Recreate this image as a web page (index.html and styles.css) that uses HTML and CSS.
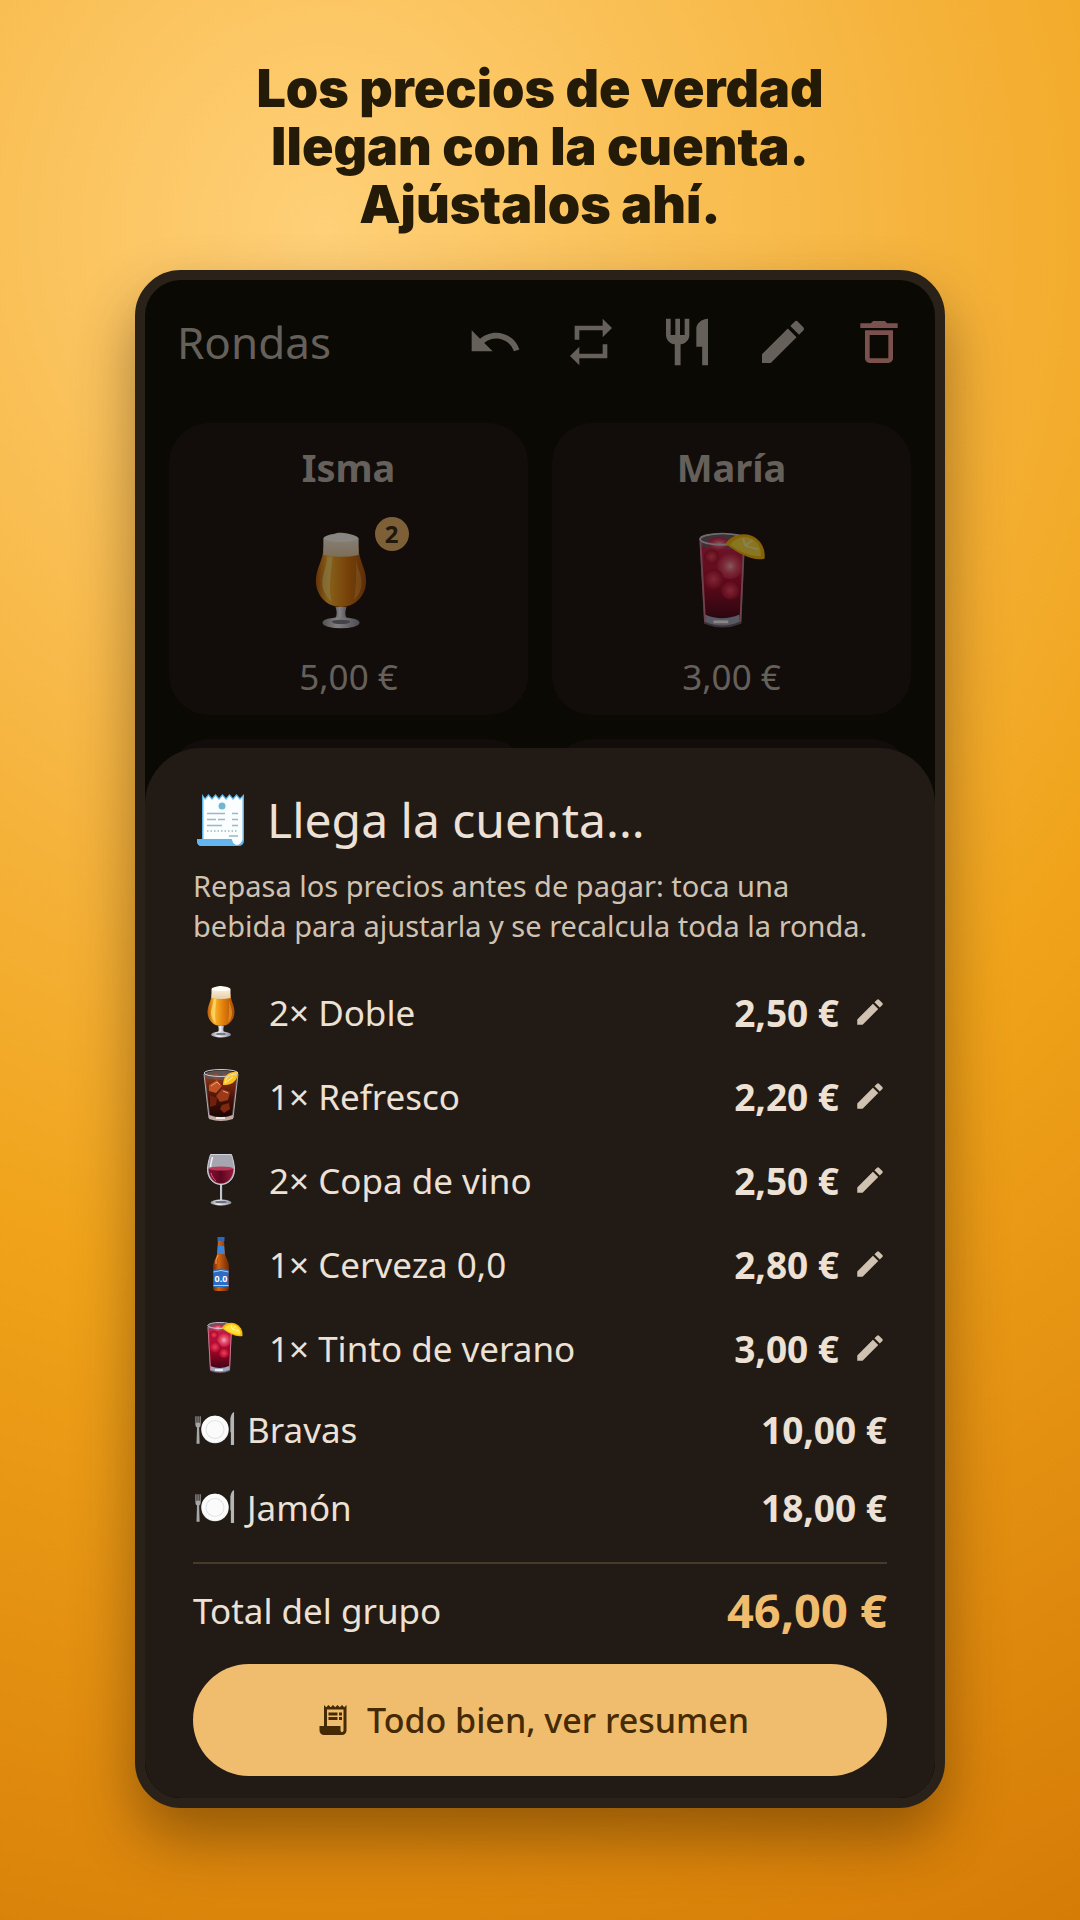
FILE: index.html
```html
<!DOCTYPE html>
<html lang="es">
<head>
    <meta charset="UTF-8">
    <meta name="viewport" content="width=device-width, initial-scale=1.0">
    <title>Rondas - Llega la cuenta</title>
    <link rel="stylesheet" href="styles.css">
</head>
<body>

    <!-- Shared drawings -->
    <svg class="sprite" aria-hidden="true">
        <defs>
            <linearGradient id="g-beer" x1="0" x2="1" y1="0" y2="0">
                <stop offset="0" stop-color="#b85a06"/>
                <stop offset=".25" stop-color="#fbb52a"/>
                <stop offset=".6" stop-color="#e07c0a"/>
                <stop offset="1" stop-color="#a84c05"/>
            </linearGradient>
            <linearGradient id="g-foam" x1="0" x2="0" y1="0" y2="1">
                <stop offset="0" stop-color="#fffaf0"/>
                <stop offset="1" stop-color="#e6cfa4"/>
            </linearGradient>
            <linearGradient id="g-glass" x1="0" x2="1" y1="0" y2="0">
                <stop offset="0" stop-color="#8f929c"/>
                <stop offset=".4" stop-color="#f1f2f6"/>
                <stop offset="1" stop-color="#85889a"/>
            </linearGradient>
            <linearGradient id="g-red" x1="0" x2="0" y1="0" y2="1">
                <stop offset="0" stop-color="#c81c44"/>
                <stop offset=".5" stop-color="#a8062a"/>
                <stop offset="1" stop-color="#3f0112"/>
            </linearGradient>
            <linearGradient id="g-cola" x1="0" x2="0" y1="0" y2="1">
                <stop offset="0" stop-color="#8a3214"/>
                <stop offset=".5" stop-color="#4a1208"/>
                <stop offset="1" stop-color="#1c0503"/>
            </linearGradient>
            <linearGradient id="g-wine" x1="0" x2="1" y1="0" y2="0">
                <stop offset="0" stop-color="#8c0f32"/>
                <stop offset=".5" stop-color="#5c061f"/>
                <stop offset="1" stop-color="#98183c"/>
            </linearGradient>
            <linearGradient id="g-bottle" x1="0" x2="1" y1="0" y2="0">
                <stop offset="0" stop-color="#6f2805"/>
                <stop offset=".35" stop-color="#d0620f"/>
                <stop offset="1" stop-color="#6f2805"/>
            </linearGradient>
            <radialGradient id="g-ice">
                <stop offset="0" stop-color="#f7a3b4"/>
                <stop offset=".5" stop-color="#e24a6a"/>
                <stop offset="1" stop-color="#c4183e"/>
            </radialGradient>
            <radialGradient id="g-ice-deep">
                <stop offset="0" stop-color="#f0405c"/>
                <stop offset="1" stop-color="#a8062a"/>
            </radialGradient>
        </defs>

        <symbol id="beer" viewBox="0 0 56 56">
            <path d="M25 42h6c-1 3-1 5 1 7h-8c2-2 2-4 1-7z" fill="url(#g-glass)"/>
            <ellipse cx="28" cy="50.500" rx="10" ry="3" fill="url(#g-glass)"/>
            <ellipse cx="28" cy="50" rx="5" ry="1.200" fill="#777a86"/>
            <path d="M18.500 10h19c0 7 4 11 4 18 0 8-6 14-13.500 14s-13.500-6-13.500-14c0-7 4-11 4-18z" fill="url(#g-beer)"/>
            <path d="M20.500 15c0 6-3 10-2.500 15 .4 4 2.500 7 5 9-1.500-5-1-12 .5-24z" fill="#ffe27a" opacity=".65"/>
            <path d="M36 16c1 6 3.500 9 3 14-.3 3-1.500 6-4 8 1-6 1.500-14 1-22z" fill="#ffc04a" opacity=".4"/>
            <path d="M18.500 5c1-2 5-2 8-3 4 0 10 1 11 3v9q-9.500 2-19 0z" fill="url(#g-foam)"/>
            <ellipse cx="28" cy="5" rx="9" ry="2" fill="#fffdf6"/>
        </symbol>

        <symbol id="cola" viewBox="0 0 56 56">
            <path d="M11 5q17-5 34 0l-5 45q-12 5-24 0z" fill="#5c514f"/>
            <path d="M12.500 10q15.500 4 31 0l-4.500 37q-11 4-22 0z" fill="url(#g-cola)"/>
            <path d="M16 17l8-5 5 6-6 7-7-2z" fill="#bd5324"/>
            <path d="M29 21l8 3-2 8-8 2-4-6z" fill="#9a3a18"/>
            <path d="M17 27l7 3-1 7-6 2z" fill="#6f210e"/>
            <path d="M29 37l7-2 1 6-6 4-4-4z" fill="#7e2a12"/>
            <path d="M18 7l6-2 4 4-5 3zM30 5l4 1-3 5z" fill="#8d4a36"/>
            <path d="M18 18l6-4 3 3M30 23l5 2" stroke="#f0a27a" fill="none"/>
            <path d="M30 17C30 8 36 3 45 4c0 8-6 14-15 13z" fill="#ffc21f"/>
            <path d="M32 15C33 9 37 6 43 6M32 15l8-6" stroke="#fff0a0" fill="none"/>
            <path d="M16 47q12 5 24 0v4q-12 4-24 0z" fill="#c1aaa0"/>
            <ellipse cx="28" cy="5" rx="17" ry="3.500" fill="none" stroke="#cfcbd2"/>
            <path d="M11 6l5 44M45 6l-5 44" stroke="#b5aeb4" fill="none"/>
            <path d="M23 50h9" stroke="#fff" stroke-width="1.500"/>
        </symbol>

        <symbol id="wine" viewBox="0 0 56 56">
            <path d="M27 32h2.200v17H27z" fill="url(#g-glass)"/>
            <ellipse cx="28" cy="50.500" rx="10.500" ry="3" fill="url(#g-glass)"/>
            <ellipse cx="28" cy="50" rx="6" ry="1.300" fill="#6b6e7c"/>
            <path d="M17.500 2.500h21c1.500 5 3 10 3 15 0 9-6 15-13.500 15s-13.500-6-13.500-15c0-5 1.500-10 3-15z" fill="#a5a6b0" stroke="#d2d3dc"/>
            <path d="M15.500 16.500q12.500 3 25 0c0 9-6 15-12.500 15s-12.500-6-12.500-15z" fill="url(#g-wine)"/>
            <ellipse cx="28" cy="16.500" rx="12" ry="2" fill="#b9385a"/>
            <path d="M19.500 5c-1 4-2 7-2 10" stroke="#f3f4f8" stroke-width="1.500" fill="none"/>
            <path d="M18 21c1 4 3 6 5 8" stroke="#d45b79" fill="none"/>
        </symbol>

        <symbol id="tinto" viewBox="0 0 56 56">
            <path d="M14.500 5q12-4 24.500 0l-2 46q-10 4-20 0z" fill="#6c5665"/>
            <path d="M15 9q12 4 23.500 0l-2 38q-9.500 4-19 0z" fill="url(#g-red)"/>
            <circle cx="31" cy="20" r="7" fill="url(#g-ice)"/>
            <ellipse cx="25" cy="8" rx="6" ry="3.500" fill="url(#g-ice)"/>
            <circle cx="21" cy="15" r="4" fill="url(#g-ice-deep)"/>
            <circle cx="22" cy="27" r="5.500" fill="url(#g-ice-deep)"/>
            <circle cx="31" cy="33" r="5" fill="url(#g-ice-deep)"/>
            <path d="M17.500 46q9 4 18.500 0v4q-9 4-18.500 0z" fill="#9fa5bd"/>
            <path d="M22 50h8" stroke="#fff" stroke-width="1.500"/>
            <ellipse cx="26.800" cy="5.500" rx="12" ry="3" fill="none" stroke="#d0c6d0"/>
            <path d="M15 7l2.500 43M38.500 7l-2 43" stroke="#c9758c" fill="none"/>
            <path d="M28.500 8A11.500 11.500 0 0 1 49.500 16q-8 2-21-8z" fill="#f5b707"/>
            <path d="M31 8.500A9 9 0 0 1 47.500 14.500q-7 1-16.500-6z" fill="#ffde35"/>
            <path d="M39 9l-1-4M39 9l4-3M39 9l7 2" stroke="#fff3a0"/>
        </symbol>

        <symbol id="receipt" viewBox="0 0 50 54">
            <path d="M6 1l3 4 3.500-4L16 5l3.500-4L23 5l3.500-4L30 5l3.500-4L37 5l3.500-4L44 5l4-4v46q0 6-6 6H6q-5 0-5-5v-2h5z" fill="#5fb4ea"/>
            <path d="M7.500 4L9 7l3.500-4L16 7l3.500-4L23 7l3.500-4L30 7l3.500-4L37 7l3.500-4L44 7l2.500-3v43q-2 5-6 5-4-1-5-6h-28z" fill="#fafeff"/>
            <path d="M1 46l5 2 3-2 3 3 3.500-3 3.500 3 3.500-3 3.500 3 3.500-3 3.500 3 3-3q0 5 4 7H6q-5 0-5-5z" fill="#64b5ee"/>
            <circle cx="26" cy="13" r="3.500" fill="#6fb8d0"/>
            <path d="M11 20.500h18M36 20.500h6M11 26.500h9M22 26.500h7M36 26.500h6M11 32.500h15M36 32.500h6M33 43h9" stroke="#9bb8c3" stroke-width="1.500"/>
            <path d="M11 38h31" stroke="#9bb8c3" stroke-width="1.500" stroke-dasharray="1.500 2"/>
        </symbol>

        <symbol id="plate" viewBox="0 0 38 34">
            <circle cx="19" cy="17.500" r="13" fill="#eceded"/>
            <circle cx="19" cy="17" r="12.500" fill="#fbfbfb"/>
            <circle cx="19" cy="17.500" r="8.500" fill="none" stroke="#e2e3e4"/>
            <path d="M.5 5H1.500v6h1V5h1v6h1V5h1v8q0 2-1.500 2.500L4.500 31h-3l.5-15.500Q.5 15 .5 13z" fill="#a4a7a8"/>
            <path d="M33.500 20V7q1-5 3.500-6v31h-3V20z" fill="#b3b6b7"/>
        </symbol>

        <symbol id="pencil" viewBox="0 0 24 24">
            <path d="M3 17.250V21h3.750L17.810 9.940l-3.750-3.750L3 17.250zM20.710 7.040a1 1 0 0 0 0-1.410l-2.340-2.340a1 1 0 0 0-1.410 0l-1.830 1.830 3.750 3.750 1.830-1.830z" fill="currentColor"/>
        </symbol>
    </svg>

    <main class="promo">
        <h1 class="headline">Los precios de verdad<br>llegan con la cuenta.<br>Ajústalos ahí.</h1>

        <div class="phone">

            <!-- Table screen, dimmed behind the sheet -->
            <section class="table-screen">
                <header class="app-bar">
                    <h2 class="app-title">Rondas</h2>
                    <div class="actions">
                        <button class="action" aria-label="Deshacer">
                            <svg viewBox="0 0 24 24"><path d="M12.500 8c-2.650 0-5.050.99-6.900 2.600L2 7v9h9l-3.620-3.620c1.390-1.160 3.160-1.880 5.120-1.880 3.540 0 6.550 2.310 7.600 5.500l2.370-.78C21.080 11.030 17.150 8 12.500 8z"/></svg>
                        </button>
                        <button class="action" aria-label="Repetir ronda">
                            <svg viewBox="0 0 24 24"><path d="M7 7h10v3l4-4-4-4v3H5v6h2V7zm10 10H7v-3l-4 4 4 4v-3h12v-6h-2v4z"/></svg>
                        </button>
                        <button class="action" aria-label="Comida">
                            <svg viewBox="0 0 24 24"><path d="M11 9H9V2H7v7H5V2H3v7c0 2.120 1.660 3.840 3.750 3.970V22h2.500v-9.030C11.340 12.840 13 11.120 13 9V2h-2v7zm5-3v8h2.500v8H21V2c-2.760 0-5 2.240-5 4z"/></svg>
                        </button>
                        <button class="action" aria-label="Editar">
                            <svg><use href="#pencil"/></svg>
                        </button>
                        <button class="action delete" aria-label="Borrar">
                            <svg viewBox="0 0 24 24"><path d="M6 19c0 1.100.9 2 2 2h8c1.100 0 2-.9 2-2V7H6v12zM8 9h8v10H8V9zm7.500-5l-1-1h-5l-1 1H4v2h16V4z"/></svg>
                        </button>
                    </div>
                </header>

                <div class="people">
                    <article class="person">
                        <h3 class="name">Isma</h3>
                        <div class="drinks">
                            <svg class="drink"><use href="#beer"/></svg>
                            <span class="badge">2</span>
                        </div>
                        <p class="spent">5,00 €</p>
                    </article>
                    <article class="person">
                        <h3 class="name">María</h3>
                        <div class="drinks">
                            <svg class="drink" viewBox="4 0 56 56"><use href="#tinto" width="56" height="56"/></svg>
                        </div>
                        <p class="spent">3,00 €</p>
                    </article>
                    <div class="person next"></div>
                    <div class="person next"></div>
                </div>
            </section>

            <!-- Bill sheet -->
            <section class="sheet">
                <h2 class="sheet-title">
                    <svg class="receipt"><use href="#receipt"/></svg>
                    Llega la cuenta...
                </h2>
                <p class="hint">Repasa los precios antes de pagar: toca una bebida para ajustarla y se recalcula toda la ronda.</p>

                <ul class="bill">
                    <li>
                        <button class="line">
                            <svg class="thumb"><use href="#beer"/></svg>
                            <span class="item">2× Doble</span>
                            <span class="price">2,50 €</span>
                            <svg class="edit"><use href="#pencil"/></svg>
                        </button>
                    </li>
                    <li>
                        <button class="line">
                            <svg class="thumb"><use href="#cola"/></svg>
                            <span class="item">1× Refresco</span>
                            <span class="price">2,20 €</span>
                            <svg class="edit"><use href="#pencil"/></svg>
                        </button>
                    </li>
                    <li>
                        <button class="line">
                            <svg class="thumb"><use href="#wine"/></svg>
                            <span class="item">2× Copa de vino</span>
                            <span class="price">2,50 €</span>
                            <svg class="edit"><use href="#pencil"/></svg>
                        </button>
                    </li>
                    <li>
                        <button class="line">
                            <svg class="thumb" viewBox="0 0 56 56">
                                <path d="M25 4h6l1 14c1 5 4 7 4 13v21q0 3-3 3H23q-3 0-3-3V31c0-6 3-8 4-13z" fill="url(#g-bottle)"/>
                                <path d="M24.500 1h7v4h-7z" fill="#2f66b8"/>
                                <path d="M25 10h6l.8 8h-7.600z" fill="#3a86dc"/>
                                <path d="M20.500 34q7.500-3 15 0v17h-15z" fill="#2c6cc4"/>
                                <path d="M20.500 36q7.500-3 15 0M20.500 49.500h15" stroke="#a9cdf4" fill="none"/>
                                <text class="label" x="28" y="46" text-anchor="middle">0.0</text>
                                <path d="M23 28v-4l2-5" stroke="#f5a55c" fill="none"/>
                            </svg>
                            <span class="item">1× Cerveza 0,0</span>
                            <span class="price">2,80 €</span>
                            <svg class="edit"><use href="#pencil"/></svg>
                        </button>
                    </li>
                    <li>
                        <button class="line">
                            <svg class="thumb"><use href="#tinto"/></svg>
                            <span class="item">1× Tinto de verano</span>
                            <span class="price">3,00 €</span>
                            <svg class="edit"><use href="#pencil"/></svg>
                        </button>
                    </li>
                    <li class="food">
                        <svg class="plate"><use href="#plate"/></svg>
                        <span class="item">Bravas</span>
                        <span class="price">10,00 €</span>
                    </li>
                    <li class="food">
                        <svg class="plate"><use href="#plate"/></svg>
                        <span class="item">Jamón</span>
                        <span class="price">18,00 €</span>
                    </li>
                </ul>

                <div class="total">
                    <span class="item">Total del grupo</span>
                    <strong class="sum">46,00 €</strong>
                </div>

                <button class="confirm">
                    <svg class="confirm-icon" viewBox="0 0 24 24"><path d="M19.500 3.500L18 2l-1.500 1.500L15 2l-1.500 1.500L12 2l-1.500 1.500L9 2 7.500 3.500 6 2v14H3v3c0 1.660 1.340 3 3 3h12c1.660 0 3-1.340 3-3V2l-1.500 1.500zM19 19c0 .55-.45 1-1 1s-1-.45-1-1v-3H8V5h11v14zM9 7h6v2H9zM16 7h2v2h-2zM9 10h6v2H9zM16 10h2v2h-2z"/></svg>
                    Todo bien, ver resumen
                </button>
            </section>
        </div>
    </main>

</body>
</html>
```
FILE: styles.css
```css
* {
    box-sizing: border-box;
}

body {
    margin: 0;
    min-height: 100vh;
    background: radial-gradient(160% 100% at 30% 12%, #ffd078 0%, #f0a31a 55%, #d47a06 100%);
    font-family: "Noto Sans", "Liberation Sans", sans-serif;
}

h1, h2, h3, p, ul {
    margin: 0;
    padding: 0;
}

button {
    padding: 0;
    border: 0;
    background: none;
    color: inherit;
    font: inherit;
    cursor: pointer;
}

svg {
    display: block;
    flex: none;
}

.sprite {
    position: absolute;
    width: 0;
    height: 0;
}

.label {
    fill: #fff;
    font-size: 9px;
    font-weight: 700;
}

.promo {
    padding: 60px 12.5% 110px;
}

.headline {
    color: #231a08;
    font-family: Inter, "Liberation Sans", sans-serif;
    font-size: 52px;
    font-weight: 900;
    line-height: 58px;
    text-align: center;
    white-space: nowrap;
}

.phone {
    margin-top: 36px;
    border: 10px solid #2a2119;
    border-radius: 46px;
    background: #0a0904;
    box-shadow: 0 30px 60px rgba(60, 30, 0, 0.45);
    overflow: hidden;
}

/* Table screen */
.app-bar {
    display: flex;
    align-items: center;
    justify-content: space-between;
    padding: 4px 28px 0 32px;
    height: 120px;
    color: #66605b;
}

.app-title {
    font-size: 44px;
    font-weight: 400;
}

.actions {
    display: flex;
    gap: 40px;
}

.action svg {
    width: 56px;
    height: 56px;
    fill: currentColor;
}

.delete {
    color: #7b514d;
}

.people {
    display: grid;
    grid-template-columns: 1fr 1fr;
    gap: 24px;
    padding: 23px 24px 0;
}

.person {
    display: flex;
    flex-direction: column;
    align-items: center;
    justify-content: space-between;
    height: 292px;
    padding: 18px 16px;
    border-radius: 40px;
    background: #120d0b;
    color: #66605b;
}

.next {
    height: 80px;
}

.name {
    font-size: 38px;
    line-height: 52px;
    font-weight: 700;
}

.drinks {
    display: flex;
    align-items: flex-start;
}

.drink {
    width: 104px;
    height: 104px;
    margin-top: 12px;
    opacity: 0.5;
}

.badge {
    width: 34px;
    height: 34px;
    margin-left: -18px;
    border-radius: 50%;
    background: #7d6038;
    color: #21170a;
    font-size: 24px;
    font-weight: 700;
    line-height: 34px;
    text-align: center;
}

.spent {
    font-size: 35px;
    line-height: 40px;
}

/* Bill sheet */
.sheet {
    position: relative;
    margin-top: -71px;
    padding: 38px 48px 22px;
    border-radius: 56px 56px 0 0;
    background: #221a15;
    color: #ece1d4;
}

.sheet-title {
    display: flex;
    align-items: center;
    gap: 18px;
    font-size: 48px;
    font-weight: 400;
    line-height: 68px;
}

.receipt {
    width: 56px;
    height: 54px;
}

.hint {
    margin-top: 12px;
    color: #d0c2b1;
    font-size: 29px;
    line-height: 40px;
}

.bill {
    margin-top: 24px;
    padding-bottom: 16px;
    border-bottom: 2px solid #463a2d;
    list-style: none;
    font-size: 35px;
}

.line {
    display: flex;
    align-items: center;
    width: 100%;
    height: 84px;
}

.thumb {
    width: 56px;
    height: 56px;
    margin-right: 20px;
}

.item {
    flex: 1;
    text-align: left;
}

.price {
    font-size: 37px;
    font-weight: 700;
}

.edit {
    width: 34px;
    height: 34px;
    margin-left: 14px;
    color: #d0c2b1;
}

.food {
    display: flex;
    align-items: center;
    height: 78px;
}

.plate {
    width: 44px;
    height: 36px;
    margin-right: 10px;
}

.total {
    display: flex;
    align-items: center;
    height: 92px;
    font-size: 35px;
}

.sum {
    color: #f0bd6f;
    font-size: 47px;
}

.confirm {
    display: flex;
    align-items: center;
    justify-content: center;
    gap: 16px;
    width: 100%;
    height: 112px;
    margin-top: 8px;
    padding-right: 16px;
    border-radius: 56px;
    background: #f0bd6f;
    color: #452b04;
    font-size: 34px;
    font-weight: 500;
}

.confirm-icon {
    width: 36px;
    height: 36px;
    fill: currentColor;
}
```
